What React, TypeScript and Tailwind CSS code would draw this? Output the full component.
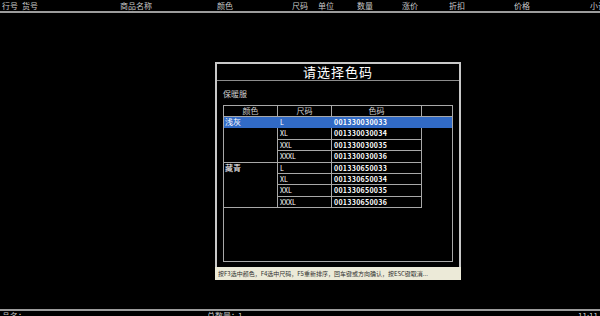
const font = { fontFamily: '"Noto Sans CJK SC", "Noto Sans", sans-serif' }

const headers = [
  { label: "行号", w: "w-[20px]" },
  { label: "货号", w: "w-[98px]" },
  { label: "商品名称", w: "w-[97px]" },
  { label: "颜色", w: "w-[75px]" },
  { label: "尺码", w: "w-[26px]" },
  { label: "单位", w: "w-[39px]" },
  { label: "数量", w: "w-[45px]" },
  { label: "涨价", w: "w-[47px]" },
  { label: "折扣", w: "w-[65px]" },
  { label: "价格", w: "w-[76px]" },
  { label: "小计", w: "w-[30px]" },
]

const groups = [
  {
    color: "浅灰",
    items: [
      { size: "L", code: "001330030033" },
      { size: "XL", code: "001330030034" },
      { size: "XXL", code: "001330030035" },
      { size: "XXXL", code: "001330030036" },
    ],
  },
  {
    color: "藏青",
    items: [
      { size: "L", code: "001330650033" },
      { size: "XL", code: "001330650034" },
      { size: "XXL", code: "001330650035" },
      { size: "XXXL", code: "001330650036" },
    ],
  },
]

const ColorTable = () => {
  return (
    <div className="h-[157px] border border-[#a8a8a8]">
      <div className="flex h-[11px] border-b border-[#a8a8a8] text-[8px] leading-[10px] text-[#d0d0d0]">
        <div className="w-[54px] border-r border-[#a8a8a8] text-center">颜色</div>
        <div className="w-[54px] border-r border-[#a8a8a8] text-center">尺码</div>
        <div className="w-[90px] border-r border-[#a8a8a8] text-center">色码</div>
        <div className="flex-1" />
      </div>
      {groups.map((group, gi) =>
        group.items.map((item, i) => {
          const active = gi === 0 && i === 0
          const last = i === group.items.length - 1
          return (
            <div
              key={item.code}
              className={`flex h-[11.4px] text-[7px] leading-[10px] text-white ${
                active ? "bg-[#316ac5]" : ""
              }`}
            >
              <div
                className={`w-[54px] border-r pl-[1px] text-[8px] ${
                  active ? "border-[#316ac5]" : "border-[#a8a8a8]"
                } ${last ? "border-b border-b-[#a8a8a8]" : ""}`}
              >
                {i === 0 ? group.color : ""}
              </div>
              <div
                className={`w-[54px] border-r border-b pl-[2px] ${
                  active ? "border-[#316ac5]" : "border-[#a8a8a8]"
                }`}
              >
                {item.size}
              </div>
              <div
                className={`w-[90px] border-r border-b pl-[2px] font-bold tracking-[0.3px] ${
                  active ? "border-[#316ac5]" : "border-[#a8a8a8]"
                }`}
              >
                {item.code}
              </div>
              <div className="flex-1" />
            </div>
          )
        })
      )}
    </div>
  )
}

export default function App() {
  return (
    <div style={font} className="flex h-[316px] w-[600px] flex-col overflow-hidden bg-black text-[#c8c8c8]">
      <div className="flex h-[11px] shrink-0 items-center pl-[2px] text-[8px] leading-[10px] whitespace-nowrap">
        {headers.map((h) => (
          <span key={h.label} className={`${h.w} shrink-0`}>
            {h.label}
          </span>
        ))}
      </div>
      <div className="h-[2px] shrink-0 bg-[#9c9c9c]" />

      <div className="flex-1 pl-[215px] pt-[49px]">
        <div className="flex h-[218px] w-[246px] flex-col border-2 border-b-0 border-[#c8c8c8]">
          <div className="flex h-[17px] shrink-0 items-center justify-center border-b border-[#8c8c8c] text-[13px] tracking-[1px] text-white">
            请选择色码
          </div>
          <div className="px-[6px] pt-[8px]">
            <div className="h-[11px] text-[8px] leading-[10px] text-[#d0d0d0]">保暖服</div>
            <div className="mt-[5px]">
              <ColorTable />
            </div>
          </div>
          <div className="mt-auto -mx-[2px] flex h-[13px] items-center bg-[#ecead8] pl-[3px] text-[6px] text-[#303030] whitespace-nowrap">
            按F3选中颜色，F4选中尺码，F5重新排序，回车键或方向确认，按ESC键取消...
          </div>
        </div>
      </div>

      <div className="h-[2px] shrink-0 bg-[#9c9c9c]" />
      <div className="flex h-[5px] shrink-0 items-start text-[8px] leading-[10px] whitespace-nowrap">
        <span className="w-[207px] pl-[2px]">品名：</span>
        <span className="w-[31px]">总数量：</span>
        <span className="w-[340px]">1</span>
        <span>11:11</span>
      </div>
    </div>
  )
}
